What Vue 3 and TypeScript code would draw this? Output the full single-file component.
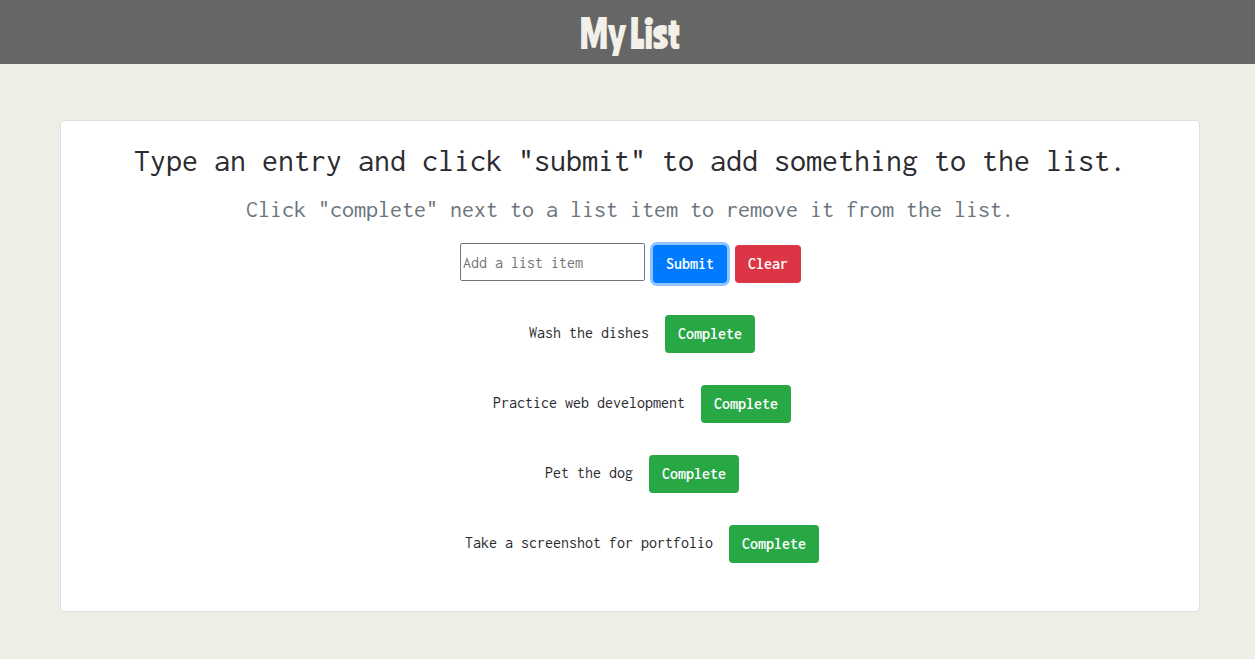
<script setup lang="ts">
import { ref } from 'vue'

interface ListItem {
  id: number
  text: string
}

const entry = ref<string>('')
const items = ref<ListItem[]>([
  { id: 1, text: 'Wash the dishes' },
  { id: 2, text: 'Practice web development' },
  { id: 3, text: 'Pet the dog' },
  { id: 4, text: 'Take a screenshot for portfolio' },
])
let nextId = 5

function addItem(): void {
  const text = entry.value.trim()
  if (!text) return
  items.value.push({ id: nextId++, text })
  entry.value = ''
}

function removeItem(id: number): void {
  items.value = items.value.filter((item) => item.id !== id)
}

function clearItems(): void {
  items.value = []
}
</script>

<template>
  <div class="page">
    <header class="banner">
      <h1 class="title">My List</h1>
    </header>
    <main class="content">
      <section class="card">
        <h2 class="heading">Type an entry and click "submit" to add something to the list.</h2>
        <p class="subheading">Click "complete" next to a list item to remove it from the list.</p>
        <form class="entry-form" @submit.prevent="addItem">
          <input v-model="entry" class="entry" type="text" placeholder="Add a list item" aria-label="Add a list item" />
          <button class="btn submit" type="submit">Submit</button>
          <button class="btn clear" type="button" @click="clearItems">Clear</button>
        </form>
        <ul class="items">
          <li v-for="item in items" :key="item.id" class="item">
            <span class="item-text">{{ item.text }}</span>
            <button class="btn complete" type="button" @click="removeItem(item.id)">Complete</button>
          </li>
        </ul>
      </section>
    </main>
  </div>
</template>

<style>
body {
  background: #eeede6;
}
</style>

<style scoped>
.page,
.page * {
  box-sizing: border-box;
}

.page {
  min-height: 100vh;
  background: #eeede6;
  color: #2b2b2f;
  font-family: Inconsolata, "DejaVu Sans Mono", monospace;
  font-size: 16px;
  line-height: 24px;
}

.banner {
  display: flex;
  justify-content: center;
  padding: 8px 0 8px 5px;
  background: #666666;
}

.title {
  margin: 0;
  color: #f2f0e8;
  font-family: Ranchers, "Lilita One", "Londrina Solid", "Passion One", Anton, "Bebas Neue", Oswald, "Roboto Condensed", "DejaVu Sans Condensed", sans-serif;
  font-size: 40px;
  font-weight: 500;
  line-height: 48px;
}

.content {
  padding: 56px 55px 47px 60px;
}

.card {
  display: flex;
  flex-direction: column;
  align-items: center;
  padding: 20px 20px 48px;
  border: 1px solid #dfdfdc;
  border-radius: 4px;
  background: #ffffff;
}

.heading {
  margin: 0 0 16px;
  font-size: 32px;
  font-weight: 400;
  line-height: 40px;
  text-align: center;
}

.subheading {
  margin: 0 0 22px;
  color: #6c757d;
  font-size: 24px;
  line-height: 24px;
  text-align: center;
}

.entry-form {
  display: flex;
  align-items: flex-end;
  gap: 8px;
  height: 40px;
  padding-left: 1px;
}

.entry {
  align-self: flex-start;
  width: 185px;
  height: 38px;
  padding: 2px;
  border: 1px solid #767676;
  border-radius: 2px;
  background: #ffffff;
  color: #212529;
  font: inherit;
}

.entry::placeholder {
  color: #757575;
  opacity: 1;
}

.btn {
  padding: 7px 13px;
  border: 0;
  border-radius: 4px;
  color: #ffffff;
  font: inherit;
  font-weight: 600;
  text-align: center;
  cursor: pointer;
}

.submit {
  background: #007bff;
  box-shadow: 0 0 0 3px #8cc4fb;
}

.clear {
  background: #dc3545;
}

.complete {
  background: #28a745;
}

.items {
  display: flex;
  flex-direction: column;
  gap: 32px;
  margin: 32px 0 0;
  padding: 0 0 0 24px;
  list-style: none;
}

.item {
  display: flex;
  align-items: flex-start;
  justify-content: center;
  gap: 16px;
}

.item-text {
  line-height: 36px;
}
</style>
